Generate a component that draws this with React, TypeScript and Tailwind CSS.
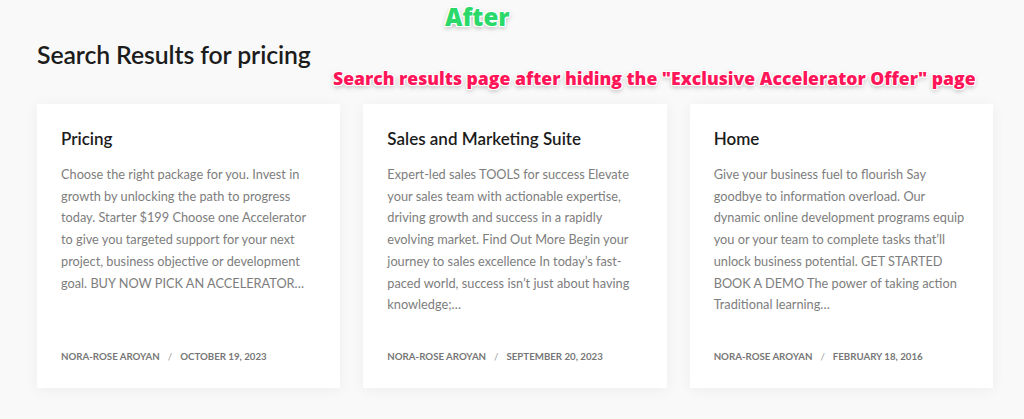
const posts = [
  {
    title: 'Pricing',
    excerpt:
      'Choose the right package for you. Invest in growth by unlocking the path to progress today. Starter $199 Choose one Accelerator to give you targeted support for your next project, business objective or development goal. BUY NOW PICK AN ACCELERATOR…',
    date: 'October 19, 2023',
  },
  {
    title: 'Sales and Marketing Suite',
    excerpt:
      'Expert-led sales TOOLS for success Elevate your sales team with actionable expertise, driving growth and success in a rapidly evolving market. Find Out More Begin your journey to sales excellence In today’s fast-paced world, success isn’t just about having knowledge;…',
    date: 'September 20, 2023',
  },
  {
    title: 'Home',
    excerpt:
      'Give your business fuel to flourish Say goodbye to information overload. Our dynamic online development programs equip you or your team to complete tasks that’ll unlock business potential. GET STARTED BOOK A DEMO The power of taking action Traditional learning…',
    date: 'February 18, 2016',
  },
];

// white halo round the annotation lettering, like the screenshot markup
const halo =
  '[text-shadow:0_0_2px_#fff,0_0_3px_#fff,1px_1px_0_#fff,-1px_-1px_0_#fff,1px_-1px_0_#fff,-1px_1px_0_#fff,0_2px_5px_rgba(0,0,0,0.35)]';

export default function App() {
  return (
    <div className="w-[1024px] h-[419px] overflow-hidden bg-[#f9f9f9] font-['Lato','Liberation_Sans',sans-serif]">
      <div className="relative pl-[37px] pr-[31px]">
        <p
          className={`absolute left-[445px] top-[1px] text-[24px] leading-8 font-black text-[#2bd96a] font-['Open_Sans','Liberation_Sans',sans-serif] ${halo}`}
        >
          After
        </p>
        <p
          className={`absolute left-[333px] top-[66px] text-[17.6px] leading-6 font-black text-[#ff1558] font-['Open_Sans','Liberation_Sans',sans-serif] ${halo}`}
        >
          Search results page after hiding the "Exclusive Accelerator Offer" page
        </p>

        <h1 className="pt-[39px] text-[24.8px] leading-[32px] font-semibold text-[#1c1c1c] tracking-[-0.1px]">
          Search Results for pricing
        </h1>

        <div className="mt-[33px] grid grid-cols-3 gap-[23px]">
          {posts.map(p => (
            <article
              key={p.title}
              className="flex flex-col h-[284px] bg-white pl-6 pr-5 pt-[23px] pb-[24px] shadow-[0_2px_14px_rgba(0,0,0,0.05)]"
            >
              <h2 className="text-[17px] leading-6 font-semibold text-[#1c1c1c]">{p.title}</h2>
              <p className="mt-[13px] text-[12.75px] leading-[21.7px] text-[#7d7d7d]">{p.excerpt}</p>
              <div className="mt-auto flex items-center gap-[8px] text-[9.7px] leading-4 font-bold uppercase text-[#777]">
                <span>Nora-Rose Aroyan</span>
                <span className="font-normal text-[#999]">/</span>
                <span>{p.date}</span>
              </div>
            </article>
          ))}
        </div>
      </div>
    </div>
  );
}
